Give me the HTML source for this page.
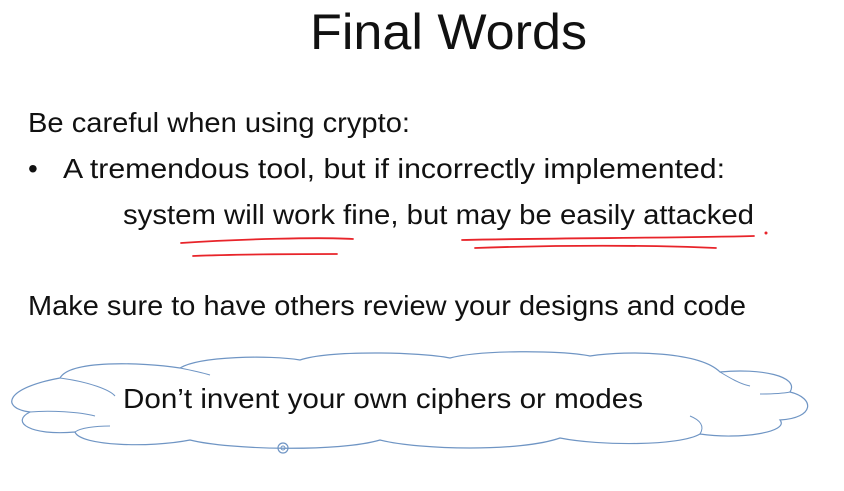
<!DOCTYPE html>
<html><head><meta charset="utf-8"><style>
html,body{margin:0;padding:0;background:#fff;}
body{width:844px;height:491px;position:relative;overflow:hidden;font-family:"Liberation Sans",sans-serif;color:#111;}
.t{position:absolute;white-space:nowrap;line-height:1;transform-origin:0 0;}
</style></head><body>
<svg width="844" height="491" style="position:absolute;left:0;top:0">
<g fill="#fff" stroke="#6f95c4" stroke-width="1.2">
<path d="M60,378 C70,360 140,362 180,368 C200,356 270,355 300,360 C330,350 420,352 450,358 C480,350 560,350 590,356 C630,350 700,352 720,372 C760,368 800,376 790,392 C815,398 815,418 780,420 C790,432 740,440 700,434 C680,446 600,446 560,438 C520,452 420,450 380,440 C340,452 230,450 190,440 C150,448 80,446 75,432 C30,436 10,422 30,412 C0,408 5,388 60,378 Z"/>
</g>
<g fill="none" stroke="#6f95c4" stroke-width="1">
<path d="M60,378 C90,382 110,390 115,396"/>
<path d="M30,412 C50,410 80,412 95,416"/>
<path d="M180,368 C190,370 200,372 210,375"/>
<path d="M720,372 C730,378 740,384 750,386"/>
<path d="M790,392 C780,394 770,394 760,394"/>
<path d="M700,434 C705,426 700,420 690,416"/>
<path d="M75,432 C80,428 95,426 110,426"/>
</g>
<circle cx="283" cy="448" r="5" fill="none" stroke="#6f95c4" stroke-width="1.2"/>
<circle cx="283" cy="448" r="2" fill="none" stroke="#6f95c4" stroke-width="1"/>
<g fill="none" stroke="#e8242a" stroke-width="1.8" stroke-linecap="round">
<path d="M181,243 C240,239 320,237 353,239"/>
<path d="M193,256 C240,254 300,254 337,254"/>
<path d="M462,240 C550,238 680,238 754,236"/>
<path d="M475,248 C560,245 650,245 716,248"/>
</g>
<circle cx="766" cy="233" r="1.5" fill="#e8242a"/>
</svg>
<div class="t" data-w="277" style="left:310px;top:7px;font-size:50px">Final Words</div>
<div class="t" data-w="382" style="left:28px;top:109px;font-size:28px">Be careful when using crypto:</div>
<div class="t" style="left:28px;top:155px;font-size:28px">•</div>
<div class="t" data-w="662" style="left:63px;top:155px;font-size:28px">A tremendous tool, but if incorrectly implemented:</div>
<div class="t" data-w="631" style="left:123px;top:201px;font-size:28px">system will work fine, but may be easily attacked</div>
<div class="t" data-w="718" style="left:28px;top:292px;font-size:28px">Make sure to have others review your designs and code</div>
<div class="t" data-w="520" style="left:123px;top:385px;font-size:28px">Don’t invent your own ciphers or modes</div>
<script>
document.querySelectorAll('.t[data-w]').forEach(function(e){var w=e.getBoundingClientRect().width;e.style.transform='scaleX('+(+e.dataset.w/w)+')';});
</script>
</body></html>
